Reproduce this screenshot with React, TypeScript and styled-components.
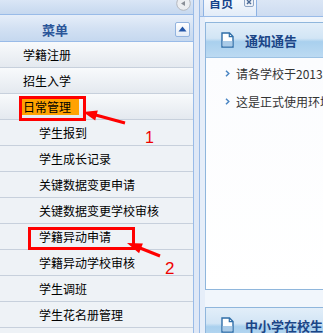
import React from "react";
import styled, { createGlobalStyle } from "styled-components";

const GlobalStyle = createGlobalStyle`
  html, body {
    margin: 0;
    padding: 0;
    overflow: hidden;
  }
  body {
    font-family: "Liberation Sans", "Noto Sans CJK SC", sans-serif;
    font-size: 12px;
    background: #dfe8f6;
  }
`;

const menu = [
  { text: "学籍注册", level: 0 },
  { text: "招生入学", level: 0 },
  { text: "日常管理", level: 0, active: true },
  { text: "学生报到", level: 1 },
  { text: "学生成长记录", level: 1 },
  { text: "关键数据变更申请", level: 1 },
  { text: "关键数据变更学校审核", level: 1 },
  { text: "学籍异动申请", level: 1 },
  { text: "学籍异动学校审核", level: 1 },
  { text: "学生调班", level: 1 },
  { text: "学生花名册管理", level: 1 },
];

const notices = [
  "请各学校于2013年9月30日前完成新生学籍注册工作",
  "这是正式使用环境，请勿随意录入测试数据",
];

const DocIcon = () => (
  <IconSvg width="13" height="16" viewBox="0 0 13 16">
    <path d="M1 1 H8.5 L12 4.5 V15 H1 Z" fill="#fff" stroke="#2f6ea8" strokeWidth="1.4" />
    <rect x="1.7" y="9" width="9.6" height="5.3" fill="#a9cbe8" />
    <path d="M8.3 1 V4.7 H12" fill="none" stroke="#2f6ea8" strokeWidth="1.2" />
  </IconSvg>
);

const App = () => {
  return (
    <>
      <GlobalStyle />
      <Page>
        <West>
          <WestTop>
            <CollapseBtn viewBox="0 0 15 15" width="15" height="15">
              <circle cx="7.5" cy="7.5" r="6.8" fill="#eceef1" stroke="#b4b8bf" />
              <path d="M5 7.5 L9 5 V10 Z" fill="#8a8f97" />
            </CollapseBtn>
          </WestTop>
          <MenuHeader>
            <MenuTitle>菜单</MenuTitle>
            <ToggleBtn>
              <svg width="9" height="6" viewBox="0 0 9 6">
                <path d="M0.5 5.5 L4.5 0.5 L8.5 5.5 Z" fill="#2456a8" />
              </svg>
            </ToggleBtn>
          </MenuHeader>
          <MenuList>
            {menu.map((m) => (
              <MenuItem key={m.text} $level={m.level}>
                {m.active ? <Highlight>{m.text}</Highlight> : m.text}
              </MenuItem>
            ))}
          </MenuList>
        </West>
        <Center>
          <TabStrip>
            <Tab>
              <TabText>首页</TabText>
              <TabClose viewBox="0 0 10 10" width="10" height="10">
                <rect x="0.5" y="0.5" width="9" height="9" rx="1.5" fill="#eef2f8" stroke="#8da4c4" />
                <path d="M3 3 L7 7 M7 3 L3 7" stroke="#4a6a96" strokeWidth="1.4" />
              </TabClose>
            </Tab>
          </TabStrip>
          <TabBody>
            <Panel>
              <PanelHeader>
                <DocIcon />
                <PanelTitle>通知通告</PanelTitle>
              </PanelHeader>
              <PanelBody>
                {notices.map((n) => (
                  <Notice key={n}>
                    <IconSvg width="5" height="7" viewBox="0 0 5 7">
                      <path d="M1 0.8 L3.8 3.5 L1 6.2" fill="none" stroke="#4b86c4" strokeWidth="1.5" />
                    </IconSvg>
                    <NoticeText>{n}</NoticeText>
                  </Notice>
                ))}
              </PanelBody>
            </Panel>
            <Panel>
              <PanelHeader>
                <DocIcon />
                <PanelTitle>中小学在校生统计</PanelTitle>
              </PanelHeader>
            </Panel>
          </TabBody>
        </Center>
        <Annotations viewBox="0 0 323 333" width="323" height="333">
          <rect x="20.5" y="97.5" width="64" height="22" fill="none" stroke="#f00" strokeWidth="3" />
          <line x1="125" y1="123" x2="92" y2="114" stroke="#f00" strokeWidth="3" />
          <polygon points="83,112 97.8,110.4 95.2,120.6" fill="#f00" />
          <text x="145" y="143" fill="#e00" fontSize="16" fontFamily="Liberation Sans, sans-serif">1</text>
          <rect x="29.5" y="228.5" width="104" height="20" fill="none" stroke="#f00" strokeWidth="3" />
          <line x1="160" y1="256" x2="135" y2="246" stroke="#f00" strokeWidth="3" />
          <polygon points="127,243 142.9,243.4 139.1,253.2" fill="#f00" />
          <text x="165" y="274" fill="#e00" fontSize="17" fontFamily="Liberation Sans, sans-serif">2</text>
        </Annotations>
      </Page>
    </>
  );
};

export default App;

const Page = styled.div`
  position: relative;
  display: flex;
  width: 323px;
  height: 333px;
  overflow: hidden;
  background: #dfe8f6;
`;

const IconSvg = styled.svg`
  flex-shrink: 0;
`;

const West = styled.div`
  width: 193px;
  flex-shrink: 0;
  display: flex;
  flex-direction: column;
  border-right: 1px solid #99bbe8;
  background: #eef2f6;
`;

const WestTop = styled.div`
  height: 14px;
  display: flex;
  justify-content: flex-end;
  align-items: flex-start;
  padding-right: 2px;
  border-bottom: 1px solid #99bbe8;
  background: linear-gradient(#dae6f6, #c6d8ef);
  overflow: hidden;
`;

const CollapseBtn = styled.svg`
  margin-top: -4px;
`;

const MenuHeader = styled.div`
  height: 27px;
  display: flex;
  align-items: center;
  justify-content: space-between;
  padding: 2px 3px 0 42px;
  box-sizing: border-box;
  border-bottom: 1px solid #99bbe8;
  background: linear-gradient(#e6eef9, #d3e1f3 50%, #c5d8ef);
`;

const MenuTitle = styled.span`
  font-family: "Noto Sans CJK SC", sans-serif;
  font-size: 13px;
  font-weight: bold;
  color: #2a5599;
`;

const ToggleBtn = styled.div`
  width: 13px;
  height: 13px;
  display: flex;
  align-items: center;
  justify-content: center;
  border: 1px solid #93b4df;
  border-radius: 2px;
  background: linear-gradient(#ffffff, #e4ecf7);
`;

const MenuList = styled.div`
  display: flex;
  flex-direction: column;
`;

const MenuItem = styled.div<{ $level: number }>`
  height: 25px;
  flex-shrink: 0;
  display: flex;
  align-items: center;
  padding-left: ${(p) => (p.$level === 0 ? 23 : 39)}px;
  border-bottom: 1px solid #c7d0dc;
  background: ${(p) =>
    p.$level === 0 ? "linear-gradient(#f8fafc, #e4e9ef)" : "#eef2f6"};
  font-family: "Noto Sans CJK SC", sans-serif;
  font-size: 12px;
  color: #000;
  white-space: nowrap;
`;

const Highlight = styled.span`
  background: #ffa200;
  padding: 2px 8px 2px 1px;
  margin-left: -1px;
  line-height: 13px;
`;

const Center = styled.div`
  flex: 1;
  margin-left: 5px;
  border-left: 1px solid #99bbe8;
  display: flex;
  flex-direction: column;
  overflow: hidden;
  background: #e4ecf8;
`;

const TabStrip = styled.div`
  height: 16px;
  flex-shrink: 0;
  display: flex;
  padding-left: 3px;
  border-bottom: 1px solid #99bbe8;
  background: linear-gradient(#dbe6f5, #cddcf1);
  overflow: hidden;
`;

const Tab = styled.div`
  width: 54px;
  display: flex;
  align-items: flex-start;
  justify-content: space-between;
  padding: 0 2px 0 5px;
  box-sizing: border-box;
  border-left: 1px solid #8db2e3;
  border-right: 1px solid #8db2e3;
  background: linear-gradient(#f4f8fd, #e2ecf8);
`;

const TabText = styled.span`
  font-family: "Noto Sans CJK SC", sans-serif;
  font-size: 12px;
  font-weight: bold;
  line-height: 12px;
  margin-top: -3px;
  color: #15428b;
`;

const TabClose = styled.svg`
  margin-top: -3px;
`;

const TabBody = styled.div`
  flex: 1;
  display: flex;
  flex-direction: column;
  gap: 17px;
  padding: 5px 0 0 5px;
  background: linear-gradient(90deg, #e6eef9 5px, #f1f6fc 5px);
`;

const Panel = styled.div`
  width: 200px;
  flex-shrink: 0;
  border: 1px solid #8fb6dc;
  border-right: none;
  display: flex;
  flex-direction: column;
  background: #fff;
`;

const PanelHeader = styled.div`
  height: 34px;
  display: flex;
  align-items: center;
  gap: 11px;
  padding-left: 15px;
  border-bottom: 1px solid #9cc2e4;
  background: linear-gradient(#e2eef9, #d2e5f5 45%, #a9d0ee 55%, #bcdaf2);
`;

const PanelTitle = styled.span`
  font-family: "Noto Sans CJK SC", sans-serif;
  font-size: 13px;
  font-weight: bold;
  color: #1b4587;
  white-space: nowrap;
`;

const PanelBody = styled.div`
  height: 230px;
  padding-top: 1px;
  display: flex;
  flex-direction: column;
  background: linear-gradient(#fbfcfe, #ffffff);
`;

const Notice = styled.div`
  height: 28px;
  display: flex;
  align-items: center;
  gap: 6px;
  padding-left: 19px;
  white-space: nowrap;
`;

const NoticeText = styled.span`
  font-family: "Noto Sans CJK SC", sans-serif;
  font-size: 12px;
  color: #333;
`;

const Annotations = styled.svg`
  position: absolute;
  left: 0;
  top: 0;
  pointer-events: none;
`;
